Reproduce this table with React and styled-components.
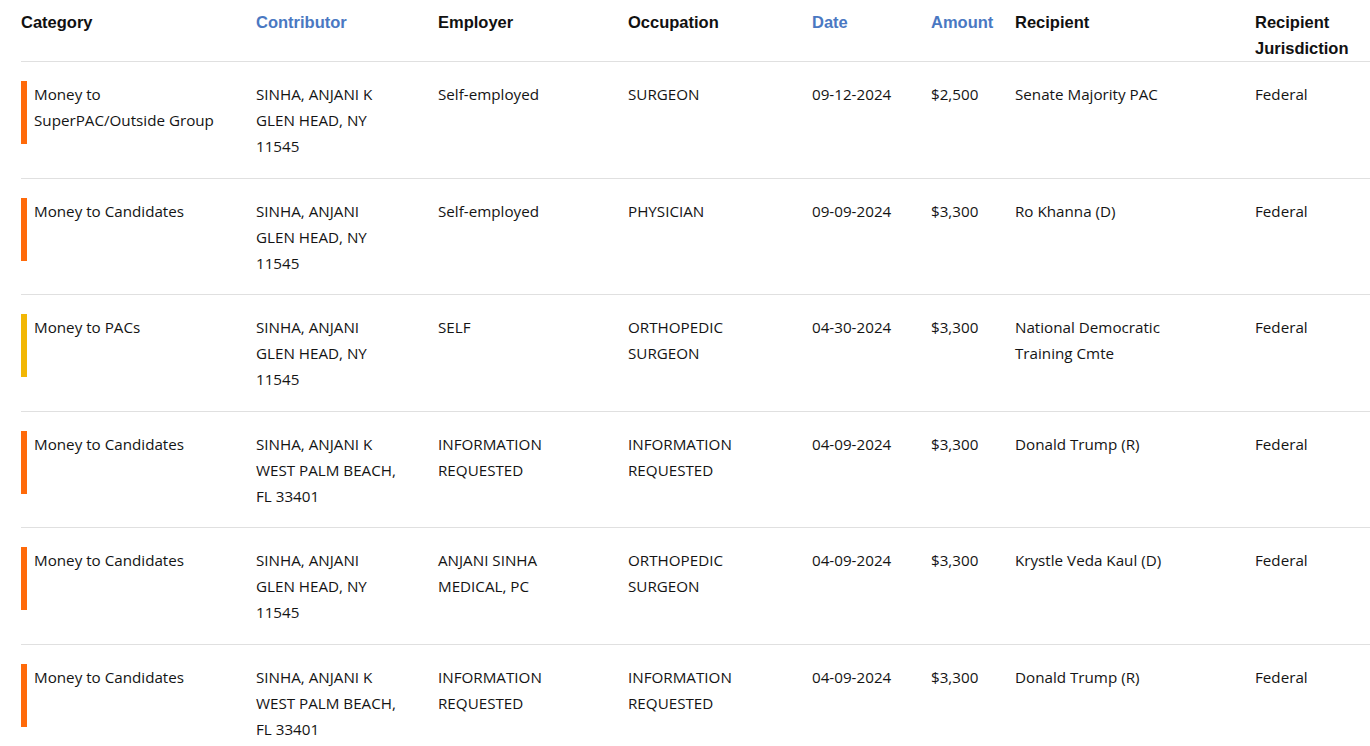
import React from 'react';
import styled, { createGlobalStyle } from 'styled-components';

const GlobalStyle = createGlobalStyle`
  html, body {
    margin: 0;
    padding: 0;
    background: #ffffff;
    overflow: hidden;
  }
`;

const COLUMNS = '235px 182px 190px 184px 119px 84px 240px 1fr';

const Page = styled.div`
  padding-left: 21px;
`;

const Table = styled.div`
  display: flex;
  flex-direction: column;
`;

const Row = styled.div`
  display: grid;
  grid-template-columns: ${COLUMNS};
  border-bottom: 1px solid #e0e0e0;
  padding: ${({ $head }) => ($head ? '9px 0 0' : '19px 0 18.6px')};
`;

const HeadCell = styled.div`
  font-family: "Liberation Sans", Arial, sans-serif;
  font-size: 16.5px;
  font-weight: 700;
  line-height: 26px;
  white-space: pre;
  color: ${({ $sortable }) => ($sortable ? '#4a78c2' : '#111111')};
`;

const Cell = styled.div`
  font-family: "Open Sans", "Noto Sans", sans-serif;
  font-size: 15.2px;
  line-height: 26px;
  color: #141414;
  white-space: pre;
`;

const CategoryCell = styled.div`
  display: flex;
  align-items: flex-start;
  gap: 7px;
`;

const Bar = styled.span`
  flex: none;
  width: 6px;
  height: 63px;
  background: ${({ $tone }) => ($tone === 'pac' ? '#f2b705' : '#ff6a0a')};
`;

const headers = [
  { label: 'Category' },
  { label: 'Contributor', sortable: true },
  { label: 'Employer' },
  { label: 'Occupation' },
  { label: 'Date', sortable: true },
  { label: 'Amount', sortable: true },
  { label: 'Recipient' },
  { label: 'Recipient\nJurisdiction' },
];

const rows = [
  {
    category: 'Money to\nSuperPAC/Outside Group',
    tone: 'candidate',
    contributor: 'SINHA, ANJANI K\nGLEN HEAD, NY\n11545',
    employer: 'Self-employed',
    occupation: 'SURGEON',
    date: '09-12-2024',
    amount: '$2,500',
    recipient: 'Senate Majority PAC',
  },
  {
    category: 'Money to Candidates',
    tone: 'candidate',
    contributor: 'SINHA, ANJANI\nGLEN HEAD, NY\n11545',
    employer: 'Self-employed',
    occupation: 'PHYSICIAN',
    date: '09-09-2024',
    amount: '$3,300',
    recipient: 'Ro Khanna (D)',
  },
  {
    category: 'Money to PACs',
    tone: 'pac',
    contributor: 'SINHA, ANJANI\nGLEN HEAD, NY\n11545',
    employer: 'SELF',
    occupation: 'ORTHOPEDIC\nSURGEON',
    date: '04-30-2024',
    amount: '$3,300',
    recipient: 'National Democratic\nTraining Cmte',
  },
  {
    category: 'Money to Candidates',
    tone: 'candidate',
    contributor: 'SINHA, ANJANI K\nWEST PALM BEACH,\nFL 33401',
    employer: 'INFORMATION\nREQUESTED',
    occupation: 'INFORMATION\nREQUESTED',
    date: '04-09-2024',
    amount: '$3,300',
    recipient: 'Donald Trump (R)',
  },
  {
    category: 'Money to Candidates',
    tone: 'candidate',
    contributor: 'SINHA, ANJANI\nGLEN HEAD, NY\n11545',
    employer: 'ANJANI SINHA\nMEDICAL, PC',
    occupation: 'ORTHOPEDIC\nSURGEON',
    date: '04-09-2024',
    amount: '$3,300',
    recipient: 'Krystle Veda Kaul (D)',
  },
  {
    category: 'Money to Candidates',
    tone: 'candidate',
    contributor: 'SINHA, ANJANI K\nWEST PALM BEACH,\nFL 33401',
    employer: 'INFORMATION\nREQUESTED',
    occupation: 'INFORMATION\nREQUESTED',
    date: '04-09-2024',
    amount: '$3,300',
    recipient: 'Donald Trump (R)',
  },
];

const App = () => (
  <Page>
    <GlobalStyle />
    <Table>
      <Row $head>
        {headers.map((h) => (
          <HeadCell key={h.label} $sortable={h.sortable}>{h.label}</HeadCell>
        ))}
      </Row>
      {rows.map((r, i) => (
        <Row key={i}>
          <CategoryCell>
            <Bar $tone={r.tone} />
            <Cell>{r.category}</Cell>
          </CategoryCell>
          <Cell>{r.contributor}</Cell>
          <Cell>{r.employer}</Cell>
          <Cell>{r.occupation}</Cell>
          <Cell>{r.date}</Cell>
          <Cell>{r.amount}</Cell>
          <Cell>{r.recipient}</Cell>
          <Cell>Federal</Cell>
        </Row>
      ))}
    </Table>
  </Page>
);

export default App;
